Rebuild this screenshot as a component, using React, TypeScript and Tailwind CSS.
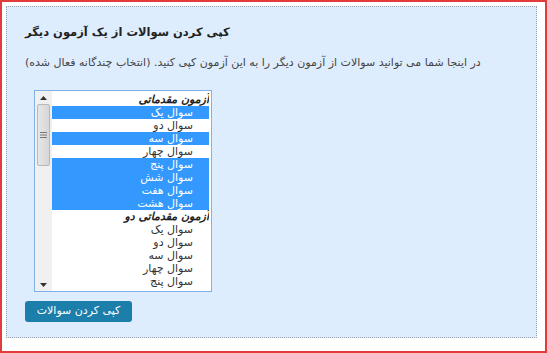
import React from "react";

type Row = { label: string; group?: boolean; selected?: boolean };

const rows: Row[] = [
  { label: "آزمون مقدماتی", group: true },
  { label: "سوال یک", selected: true },
  { label: "سوال دو" },
  { label: "سوال سه", selected: true },
  { label: "سوال چهار" },
  { label: "سوال پنج", selected: true },
  { label: "سوال شش", selected: true },
  { label: "سوال هفت", selected: true },
  { label: "سوال هشت", selected: true },
  { label: "آزمون مقدماتی دو", group: true },
  { label: "سوال یک" },
  { label: "سوال دو" },
  { label: "سوال سه" },
  { label: "سوال چهار" },
  { label: "سوال پنج" },
];

function ScrollBar() {
  return (
    <div className="flex h-full w-[17px] shrink-0 flex-col bg-[#f0f0f0]">
      <div className="flex h-[13px] items-center justify-center">
        <svg width="7" height="4" viewBox="0 0 7 4">
          <path d="M0 4 L3.5 0 L7 4 Z" fill="#333" />
        </svg>
      </div>
      <div className="mx-[2px] flex h-[62px] items-center justify-center rounded-[2px] border border-[#b8b8b8] bg-gradient-to-r from-[#e6e6e6] to-[#d6d6d6]">
        <svg width="7" height="6" viewBox="0 0 7 6">
          <path d="M0 0.5 H7 M0 3 H7 M0 5.5 H7" stroke="#777" strokeWidth="1" />
        </svg>
      </div>
      <div className="flex-1" />
      <div className="flex h-[13px] items-center justify-center">
        <svg width="7" height="4" viewBox="0 0 7 4">
          <path d="M0 0 L3.5 4 L7 0 Z" fill="#333" />
        </svg>
      </div>
    </div>
  );
}

export default function App() {
  return (
    <div
      className="h-[353px] w-[547px] overflow-hidden border-2 border-[#e23b3b] bg-white pl-[4px] pr-[6px] pt-[4px]"
      style={{ fontFamily: '"DejaVu Sans", Tahoma, sans-serif' }}
    >
      <div
        dir="rtl"
        className="h-[332px] w-[531px] border border-dotted border-[#9aa3ad] bg-[#deedfd] pl-[18px] text-left"
      >
        <div className="pt-[17px] text-[11.5px] font-bold leading-[16px] text-[#222]">
          کپی کردن سوالات از یک آزمون دیگر
        </div>
        <div className="pt-[15px] text-[11px] leading-[16px] text-[#444]">
          در اینجا شما می توانید سوالات از آزمون دیگر را به این آزمون کپی کنید. (انتخاب چندگانه فعال شده)
        </div>
        <div className="flex justify-end pt-[19px]">
          <div className="ml-[9px] flex h-[202px] w-[178px] overflow-hidden border border-[#7fb2e5] bg-white">
            <div className="flex-1 pr-[2px] pt-[2px] text-right">
              {rows.map((r, i) => (
                <div
                  key={i}
                  className={
                    "h-[13px] overflow-hidden whitespace-nowrap text-[11px] leading-[13px] " +
                    (r.group
                      ? "font-bold italic text-[#222]"
                      : "pr-[16px] " + (r.selected ? "bg-[#3399ff] text-white" : "text-[#333]"))
                  }
                >
                  {r.label}
                </div>
              ))}
            </div>
            <ScrollBar />
          </div>
        </div>
        <div className="flex justify-end pt-[9px]">
          <button className="h-[21px] w-[107px] rounded-[3px] bg-[#1b7eab] text-[11px] text-white">
            کپی کردن سوالات
          </button>
        </div>
      </div>
    </div>
  );
}
